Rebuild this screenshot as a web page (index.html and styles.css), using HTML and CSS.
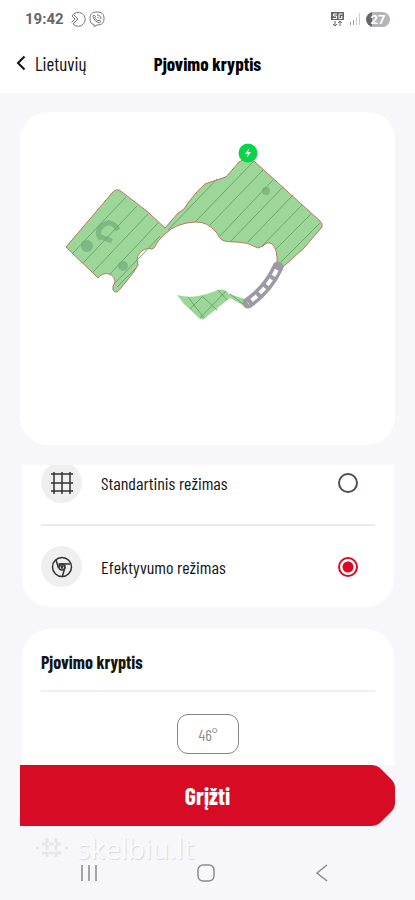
FILE: index.html
```
<!DOCTYPE html>
<html lang="lt">

	<head>
		<meta charset="utf-8" />
		<meta name="viewport" content="width=device-width, initial-scale=1" />
		<title>Pjovimo kryptis</title>
		<link rel="stylesheet" href="styles.css">
	</head>
	<body>
		<header class="top">
			<div class="status">
				<span class="time">19:42</span>
				<svg class="status-icon" width="16" height="16" viewBox="0 0 16 16">
					<path d="M2 5 A7 7 0 1 1 3 13 L8 8 L4 4 M2 5 L5 8 L1.500 11.500" />
				</svg>
				<svg class="status-icon" width="16" height="16" viewBox="0 0 16 16">
					<path d="M8 1 C13 1 15 3 15 7.500 C15 12 13 14 8 14 L5 15.500 V13.500 C2 13 1 11 1 7.500 C1 3 3 1 8 1 Z" />
					<path d="M5 4 L4 5.500 C5 9 7 11 10.500 12 L12 10.500 L10 9 L9 10 C7.500 9 6.500 8 6 6.500 L6.500 5.500 Z M8 4 C10.500 4 12 5.500 12 8 M8.500 6 L10 7.500" />
				</svg>
				<div class="status-right">
					<svg width="13" height="15" viewBox="0 0 13 15">
						<rect class="net-box" width="13" height="8" />
						<path class="net-text" d="M6 2 H2.500 V4 H5.500 V6.500 H2 M11.500 2 H8 V6.500 H11 V4.500 H10" />
						<path class="net-arrows" d="M4 9 V14 M2 12 L4 14 L6 12 M9 14 V9 M7 11 L9 9 L11 11" />
					</svg>
					<svg width="12" height="12" viewBox="0 0 12 12">
						<path class="bar-on" d="M1.500 9 V12 M4.500 7 V12" />
						<path class="bar-off" d="M7.500 4 V12 M10.500 0 V12" />
					</svg>
					<span class="battery">27</span>
				</div>
			</div>
			<div class="nav">
				<a class="back" href="#">
					<svg width="10" height="16" viewBox="0 0 10 16"><path d="M8.500 1.500 L2 8 L8.500 14.500" /></svg>
					Lietuvių
				</a>
				<h1 class="title">Pjovimo kryptis</h1>
			</div>
		</header>

		<main class="main">
			<section class="card map">
				<svg class="map-svg" viewBox="20 112 375 333">
					<path class="lawn lawn-edge" d="M66 247 L112 193 Q117 187 122 192 L148 212 L165 228 L178 213 L184 209 L188 203 Q198 190 205 184 Q210 182 226 177 L239 162 Q247 156 255 162 L320 221 Q323 224 322 227 L304 248 L283 267 L277 265 Q278 249 272 244 Q267 241 263 246 L258 248 Q248 242 237 242 Q226 242 222 240 Q219 238 217 233 Q207 221 195 222 Q176 223 165 234 Q157 241 154 248 L152 249 Q144 247 139 254 Q136 258 138 265 L133 273 L121 288 Q116 295 113 290 Q112 287 115 282 Q115 276 109 274 Q103 272 98 278 Z" />
					<path class="lawn" d="M177 295 Q188 298 198 296 Q208 294 218 290 Q225 288 229 294 L245 299 L249 305 L246 307 L230 298 L205 318 Q202 321 199 318 L184 304 Z" />
					<g class="spots">
						<ellipse cx="87" cy="246" rx="6" ry="6" />
						<circle cx="123" cy="266" r="5" />
						<circle cx="266" cy="191" r="4" />
						<path class="spot-arc" d="M118 230 Q112 219 103 225 Q95 232 101 239 M101 237 L112 241" />
					</g>
					<path class="stripe" d="M126 197 L72 254 M137 206 L83 263 M148 214 L92 273 M158 223 L110 274 M160 236 L115 283 M137 267 L117 287" />
					<path class="stripe" d="M217 179 L168 230 M253 162 L196 221 M263 170 L210 225 M273 180 L220 236 M283 187 L230 242 M293 195 L248 242 M302 205 L261 247 M311 214 L276 249 M320 223 L279 264" />
					<path class="stripe" d="M190 309 L203 296 M200 318 L226 291 M188 297 L204 318 M202 296 L217 310 M218 290 L227 300 M230 294 L246 306" />
					<path class="road" d="M278 267 Q268 289 248 303" />
					<path class="road-dash" d="M278 267 Q268 289 248 303" />
					<circle class="station" cx="248" cy="153" r="9.500" />
					<path class="bolt" d="M249.500 148 L245 154 H248 L246.500 158 L251 152 H248 Z" />
				</svg>
			</section>

			<div class="scroll">
				<section class="card modes">
					<label class="mode">
						<span class="mode-icon">
							<svg width="24" height="24" viewBox="0 0 24 24">
								<path d="M4 1 V23 M12 1 V23 M20 1 V23 M1 3 H23 M1 12 H23 M1 20 H23" />
							</svg>
						</span>
						<span class="mode-name">Standartinis režimas</span>
						<input class="radio" type="radio" name="mode" />
					</label>
					<label class="mode">
						<span class="mode-icon">
							<svg width="24" height="24" viewBox="0 0 24 24">
								<circle cx="12" cy="12" r="9.500" />
								<circle cx="12" cy="12" r="3" />
								<path d="M6 5 L8.500 13 M8.500 9 H20.500 M15 12 L12.500 21 M11 11 H13 L12 13 Z" />
							</svg>
						</span>
						<span class="mode-name">Efektyvumo režimas</span>
						<input class="radio" type="radio" name="mode" checked />
					</label>
				</section>

				<section class="card angle">
					<h2 class="angle-title" id="angle-title">Pjovimo kryptis</h2>
					<input class="angle-input" type="text" value="46°" aria-labelledby="angle-title" />
				</section>
			</div>

			<button class="submit" type="button">
				<svg class="submit-tip" width="30" height="61" viewBox="0 0 30 61">
					<path d="M0 0 H6 Q12 0 16 4 L26 14 Q30 18 30 23 V38 Q30 43 26 47 L16 57 Q12 61 6 61 H0 Z" />
				</svg>
				<span class="submit-text">Grįžti</span>
			</button>
		</main>

		<footer class="bottom">
			<div class="mark">
				<svg width="36" height="26" viewBox="0 0 36 26">
					<path d="M13 3 V23 M22 3 V23 M8 9 H28 M8 18 H28 M2 13 H5 M31 13 H34" />
				</svg>
				<span>skelbiu.lt</span>
			</div>
			<div class="keys">
				<svg width="18" height="18" viewBox="0 0 18 18"><path d="M2 1 V17 M9 1 V17 M16 1 V17" /></svg>
				<svg width="18" height="18" viewBox="0 0 18 18"><rect x="1" y="1" width="16" height="16" rx="5" /></svg>
				<svg width="18" height="18" viewBox="0 0 18 18"><path d="M14 1 L4 9 L14 17" /></svg>
			</div>
		</footer>
	</body>
</html>
```
FILE: styles.css
```
*{
	box-sizing: border-box;
}
body{
	margin: 0;
	min-height: 100vh;
	display: flex;
	flex-direction: column;
	background: #f7f7fb;
	color: #161616;
	font-family: "Barlow Condensed", "Liberation Sans Narrow", "Roboto Condensed", "DejaVu Sans Condensed", sans-serif;
}
svg{
	display: block;
	fill: none;
}

/* status bar and title */
.top{
	height: 93px;
	background: #fff;
}
.status{
	height: 38px;
	padding: 0 25px;
	display: flex;
	align-items: center;
	gap: 3px;
}
.time{
	margin-right: 3px;
	font: bold 15px Roboto, sans-serif;
	color: #666;
}
.status-icon{
	stroke: #777;
}
.status-right{
	margin-left: auto;
	display: flex;
	align-items: center;
	gap: 5px;
}
.net-box{
	fill: #666;
}
.net-text{
	stroke: #fff;
}
.net-arrows{
	stroke: #666;
}
.bar-on{
	stroke: #999;
}
.bar-off{
	stroke: #ccc;
}
.battery{
	width: 24px;
	height: 15px;
	border-radius: 8px;
	background: linear-gradient(to right, #666 27%, #b5b5b5 27%);
	color: #fff;
	font: bold 13px/15px Roboto, sans-serif;
	text-align: center;
}
.nav{
	height: 50px;
	padding: 0 16px;
	display: grid;
	grid-template-columns: 1fr auto 1fr;
	align-items: center;
}
.back{
	display: flex;
	align-items: center;
	gap: 9px;
	font-size: 19px;
	color: #111;
	text-decoration: none;
}
.back svg{
	stroke: #111;
	stroke-width: 2;
}
.title{
	margin: 0;
	font-size: 19px;
	font-weight: bold;
	color: #000;
}

/* cards */
.main{
	flex: 1;
	padding: 19px 20px 0;
	display: flex;
	flex-direction: column;
}
.card{
	background: #fff;
	border-radius: 28px;
}
.map-svg{
	width: 100%;
}
.lawn{
	fill: #9cd799;
}
.lawn-edge{
	stroke: #bc7562;
}
.stripe{
	stroke: #6ba76c;
}
.spots{
	fill: #7db982;
}
.spot-arc{
	fill: none;
	stroke: #7db982;
	stroke-width: 5;
}
.road{
	stroke: #9c9ba5;
	stroke-width: 11;
	stroke-linecap: round;
}
.road-dash{
	stroke: #fff;
	stroke-width: 4;
	stroke-dasharray: 7 4;
	stroke-dashoffset: -3;
}
.station{
	fill: #08d34a;
}
.bolt{
	fill: #fff;
}

/* the list is scrolled a little, so its first row is cut */
.scroll{
	flex: 1;
	margin-top: 20px;
	padding: 0 1px 0 2px;
	overflow: hidden;
	display: flex;
	flex-direction: column;
	gap: 22px;
}
.modes{
	margin-top: -24px;
	padding: 0 19px;
}
.mode{
	height: 83px;
	padding-right: 17px;
	display: flex;
	align-items: center;
	gap: 19px;
}
.mode + .mode{
	border-top: 2px solid #ebebec;
}
.mode-icon{
	width: 41px;
	height: 41px;
	border-radius: 50%;
	background: #efefef;
	display: grid;
	place-items: center;
}
.mode-icon svg{
	stroke: #333;
	stroke-width: 1.5;
}
.mode-name{
	flex: 1;
	font-size: 18px;
}
.radio{
	appearance: none;
	width: 20px;
	height: 20px;
	margin: 0;
	border: 2px solid #574b4f;
	border-radius: 50%;
}
.radio:checked{
	border-color: #d60b25;
	background: radial-gradient(circle, #d60b25 5px, #fff 6px);
}
.angle{
	flex: 1;
	padding: 0 19px;
	border-radius: 28px 28px 0 0;
}
.angle-title{
	margin: 0 0 22px;
	height: 63px;
	line-height: 66px;
	border-bottom: 2px solid #f0f0f1;
	font-size: 18px;
}
.angle-input{
	display: block;
	width: 62px;
	height: 40px;
	margin: 0 auto;
	border: 1px solid #858585;
	border-radius: 11px;
	background: #fff;
	color: #8d8d8d;
	font: 16px "Barlow Condensed", "Liberation Sans Narrow", "Roboto Condensed", sans-serif;
	text-align: center;
}

/* red button with the cut right end */
.submit{
	height: 61px;
	padding: 0;
	border: 0;
	display: grid;
	grid-template-columns: 1fr 30px;
	align-items: center;
	background: linear-gradient(#d70b24, #d70b24) no-repeat 0 0 / calc(100% - 29px) 100%;
	color: #fff;
	font-family: inherit;
}
.submit-tip{
	grid-area: 1 / 2;
	fill: #d70b24;
}
.submit-text{
	grid-area: 1 / 1 / 2 / 3;
	font-size: 24px;
	font-weight: bold;
}

/* watermark and system keys */
.bottom{
	height: 74px;
	padding: 8px 34px 0;
}
.mark{
	height: 28px;
	display: flex;
	align-items: center;
	gap: 7px;
	color: #fafafc;
	font: 28px/28px "Open Sans", sans-serif;
	text-shadow: 1px 1px 1px #d8d8dc;
}
.mark svg{
	stroke: #e6e6ea;
	stroke-width: 3;
	stroke-dasharray: 5 2;
}
.keys{
	height: 22px;
	padding: 0 50px 0 46px;
	display: flex;
	align-items: center;
	justify-content: space-between;
}
.keys svg{
	stroke: #8a8a8f;
	stroke-width: 1.5;
}
```
